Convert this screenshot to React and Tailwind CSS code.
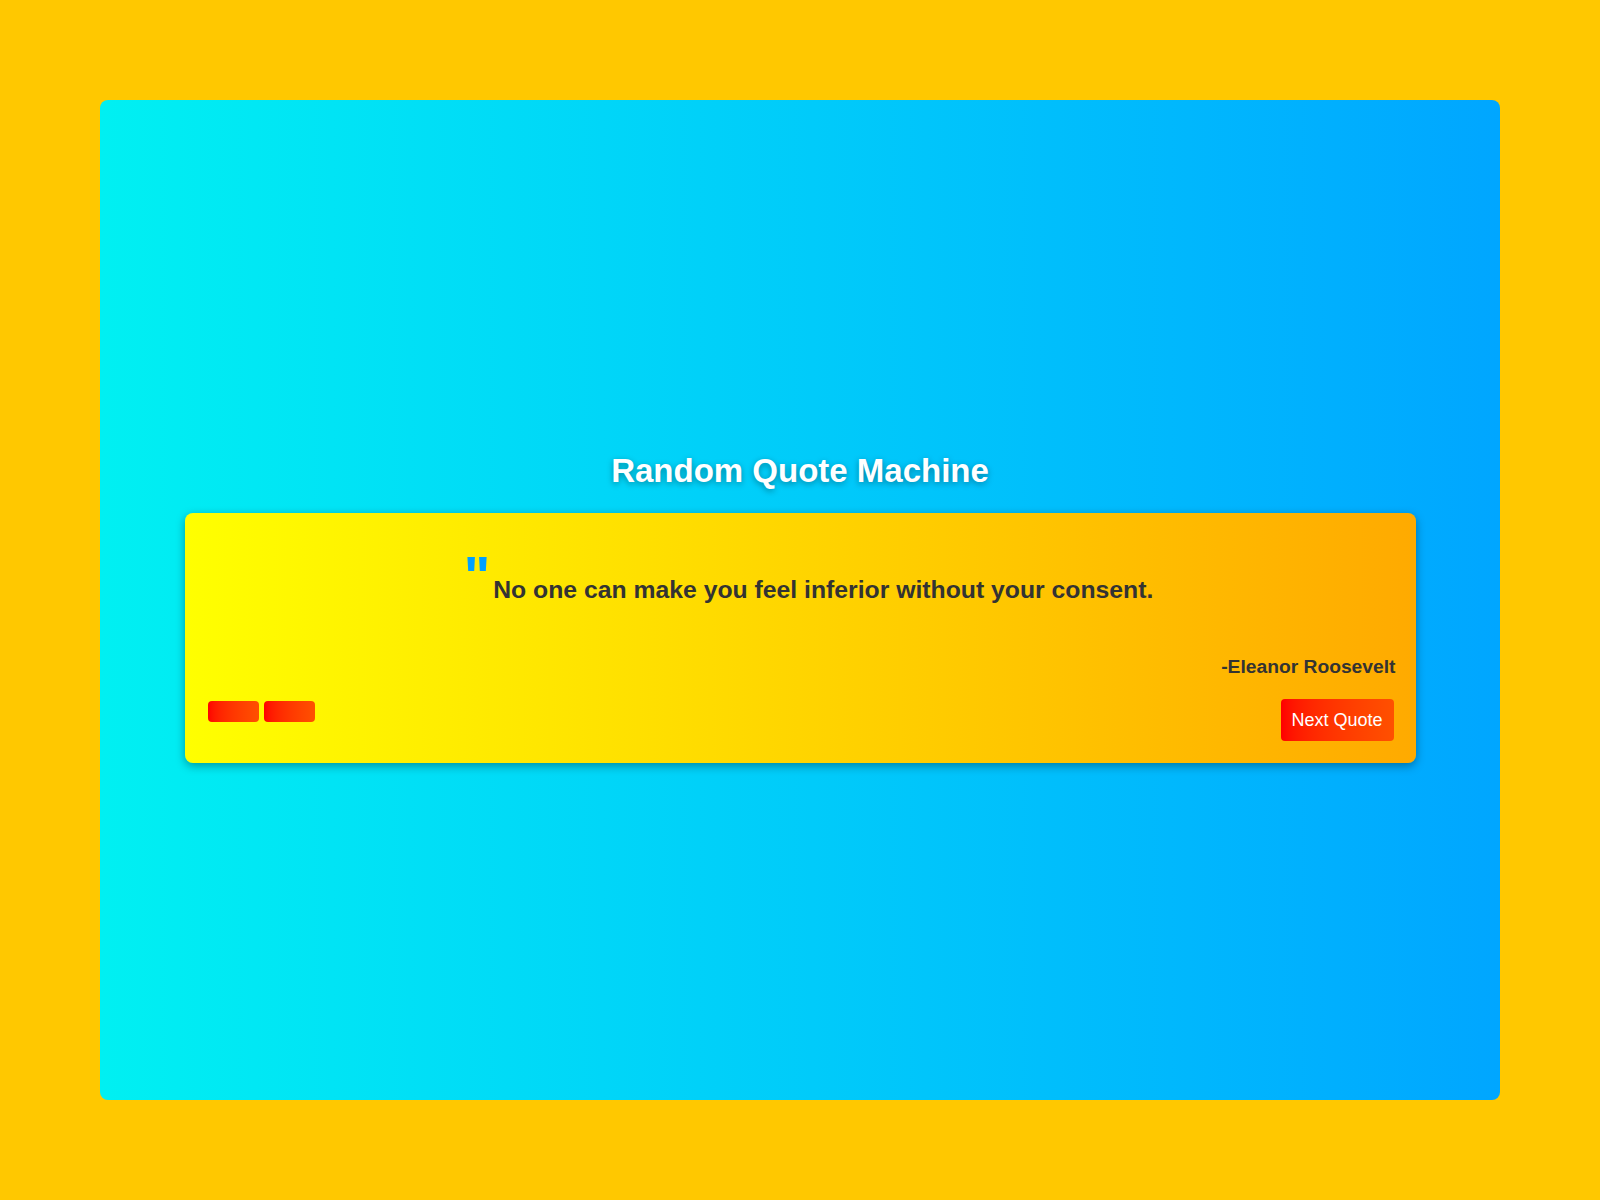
export default function App() {
  return (
    <div
      className="min-h-[1200px] w-full bg-[#ffc800] p-[100px]"
      style={{ fontFamily: '"Liberation Sans", Arial, sans-serif' }}
    >
      <div className="flex h-[1000px] w-full flex-col items-center justify-center rounded-lg bg-linear-to-r from-[#00f0f2] to-[#00a6ff]">
        <h1 className="mt-[15px] mb-[23px] text-[33px] leading-[38px] font-bold text-white [text-shadow:0_2px_6px_rgba(0,0,0,0.35)]">
          Random Quote Machine
        </h1>

        <div className="flex h-[250px] w-[1231px] flex-col rounded-lg bg-linear-to-r from-[#ffff00] to-[#ffaa00] px-[22px] pt-[35px] pb-[22px] shadow-[0_3px_10px_rgba(0,0,0,0.35)]">
          <div className="flex items-start justify-center pl-[17px]">
            <span className="mr-[3px] text-[56px] leading-none font-bold text-[#00a0ff]">"</span>
            <p className="mt-[27px] text-[24.75px] leading-[29px] font-bold text-[#333]">
              No one can make you feel inferior without your consent.
            </p>
          </div>

          <p className="mt-[52px] -mr-[2px] text-right text-[19.25px] leading-[22px] font-bold text-[#333]">
            -Eleanor Roosevelt
          </p>

          <div className="mt-[21px] flex items-start justify-between">
            <div className="mt-[2px] flex gap-[5px] pl-[1px]">
              <button className="h-[21px] w-[51px] rounded bg-linear-to-r from-[#ff0000] to-[#ff5000]"></button>
              <button className="h-[21px] w-[51px] rounded bg-linear-to-r from-[#ff0000] to-[#ff5000]"></button>
            </div>
            <button className="h-[42px] w-[113px] rounded bg-linear-to-r from-[#ff0000] to-[#ff5000] text-[18px] text-white">
              Next Quote
            </button>
          </div>
        </div>
      </div>
    </div>
  );
}
